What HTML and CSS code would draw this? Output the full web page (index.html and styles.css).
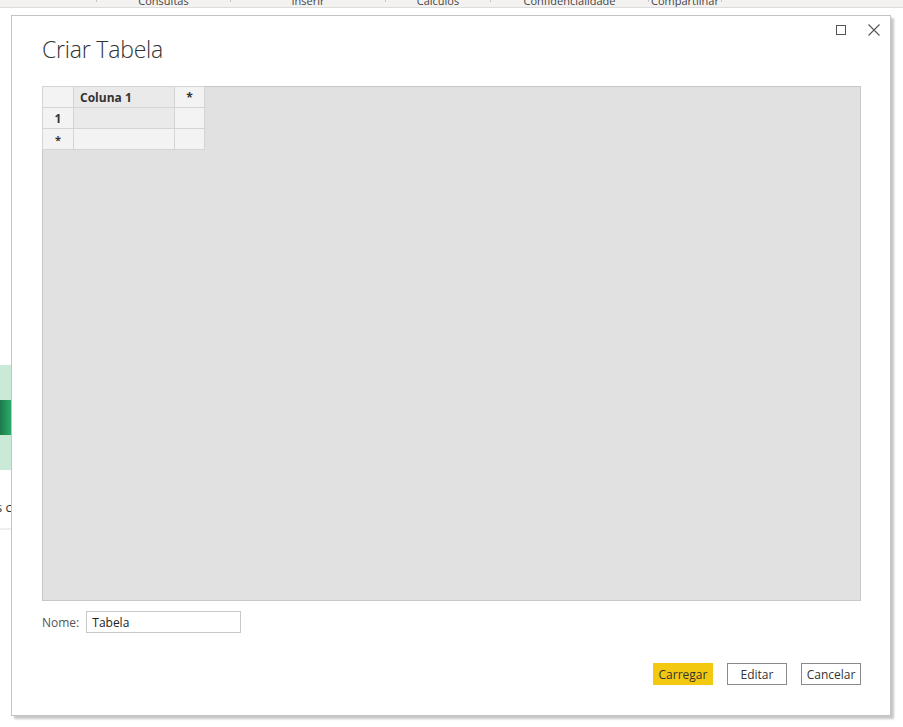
FILE: index.html
```html
<!DOCTYPE html>
<html lang="pt">
  <head>
    <meta charset="UTF-8" />
    <meta name="viewport" content="width=device-width, initial-scale=1.0" />
    <title>Criar Tabela</title>
    <link rel="stylesheet" href="styles.css">
  </head>
  <body>
    <div class="ribbon">
      <span class="tab tab-1">Consultas</span>
      <span class="tab tab-2">Inserir</span>
      <span class="tab tab-3">Cálculos</span>
      <span class="tab tab-4">Confidencialidade</span>
      <span class="tab tab-5">Compartilhar</span>
    </div>
    <div class="page">
      <div class="tile">
        <div class="tile-img"></div>
      </div>
      <div class="tile-text">dados c</div>
      <div class="tile-line"></div>
    </div>

    <div class="dialog">
      <div class="win-btns">
        <svg width="12" height="12" viewBox="0 0 12 12"><rect x="1.5" y="1.5" width="9" height="9" fill="none" stroke="#555" /></svg>
        <svg width="14" height="14" viewBox="0 0 14 14"><path d="M1.5 1.5 L12.5 12.5 M12.5 1.5 L1.5 12.5" stroke="#555" stroke-width="1.1" /></svg>
      </div>
      <h1 class="dlg-title">Criar Tabela</h1>
      <div class="grid-area">
        <table class="grid">
          <tr>
            <td class="corner"></td>
            <td class="col-head">Coluna 1</td>
            <td class="add-col">*</td>
          </tr>
          <tr>
            <td class="row-head">1</td>
            <td class="cell"></td>
            <td class="add-cell"></td>
          </tr>
          <tr>
            <td class="row-head star">*</td>
            <td class="cell new"></td>
            <td class="add-cell"></td>
          </tr>
        </table>
      </div>
      <div class="name-row">
        <label>Nome:</label>
        <div class="name-input">Tabela</div>
      </div>
      <div class="actions">
        <button class="btn primary">Carregar</button>
        <button class="btn">Editar</button>
        <button class="btn">Cancelar</button>
      </div>
    </div>
  </body>
</html>
```

FILE: styles.css
```css
* {
  margin: 0;
  padding: 0;
  box-sizing: border-box;
}

body {
  width: 903px;
  height: 727px;
  overflow: hidden;
  background: #fff;
  font-family: "Open Sans", "Noto Sans", sans-serif;
  font-size: 12px;
  color: #333;
  position: relative;
}

.ribbon {
  height: 8px;
  background: #f3f2f1;
  border-bottom: 1px solid #dcdcdc;
  display: flex;
  overflow: hidden;
}

.tab {
  height: 7px;
  line-height: 1;
  margin-top: -5px;
  font-size: 11px;
  color: #444;
  text-align: center;
  border-left: 1px solid #c8c8c8;
}

.tab-1 { margin-left: 96px; width: 134px; }
.tab-2 { width: 155px; }
.tab-3 { width: 105px; }
.tab-4 { width: 158px; }
.tab-5 { width: 74px; border-right: 1px solid #c8c8c8; }

.page {
  padding-top: 357px;
}

.tile {
  width: 40px;
  height: 105px;
  background: #c8ead6;
  padding-top: 35px;
}

.tile-img {
  height: 35px;
  background: linear-gradient(90deg, #1f7a4a 0, #2fbf78 40%, #1c6b40 100%);
}

.tile-text {
  margin-top: 28px;
  margin-left: -35px;
  font-size: 13px;
  color: #333;
  white-space: nowrap;
}

.tile-line {
  margin-top: 12px;
  height: 2px;
  width: 20px;
  background: #eee;
}

.dialog {
  position: absolute;
  left: 11px;
  top: 15px;
  width: 880px;
  height: 701px;
  background: #fff;
  border: 1px solid #c4c4c4;
  box-shadow: 3px 3px 2px rgba(0, 0, 0, 0.22);
  padding: 0 29px 0 30px;
  display: flex;
  flex-direction: column;
}

.win-btns {
  position: absolute;
  top: 7px;
  right: 9px;
  display: flex;
  gap: 20px;
  align-items: center;
}

.dlg-title {
  margin-top: 17px;
  height: 53px;
  font-size: 23px;
  font-weight: 300;
  color: #333;
  letter-spacing: -0.2px;
}

.grid-area {
  height: 515px;
  background: #e1e1e1;
  border: 1px solid #c8c8c8;
}

.grid {
  border-collapse: collapse;
  margin: -1px 0 0 -1px;
}

.grid td {
  height: 21px;
  border: 1px solid #d4d4d4;
  font-weight: 700;
  color: #333;
  padding: 0;
}

.corner { width: 31px; background: #f3f3f3; }
.col-head { width: 101px; background: #eaeaea; padding-left: 6px !important; }
.add-col { width: 30px; background: #f3f3f3; text-align: center; }
.row-head { background: #f3f3f3; text-align: center; }
.star { font-size: 11px; }
.cell { background: #eaeaea; }
.cell.new { background: #f3f3f3; }
.add-cell { background: #f3f3f3; }

.name-row {
  margin-top: 10px;
  display: flex;
  align-items: center;
  gap: 7px;
}

.name-row label {
  color: #555;
}

.name-input {
  width: 155px;
  height: 22px;
  border: 1px solid #c8c8c8;
  padding: 2px 0 0 5px;
  color: #222;
}

.actions {
  margin-top: 30px;
  display: flex;
  justify-content: flex-end;
  gap: 14px;
}

.btn {
  width: 60px;
  height: 22px;
  border: 1px solid #8a8a8a;
  background: #fff;
  font-family: inherit;
  font-size: 12px;
  color: #333;
}

.btn.primary {
  background: #f2c811;
  border-color: #f2c811;
}
```
